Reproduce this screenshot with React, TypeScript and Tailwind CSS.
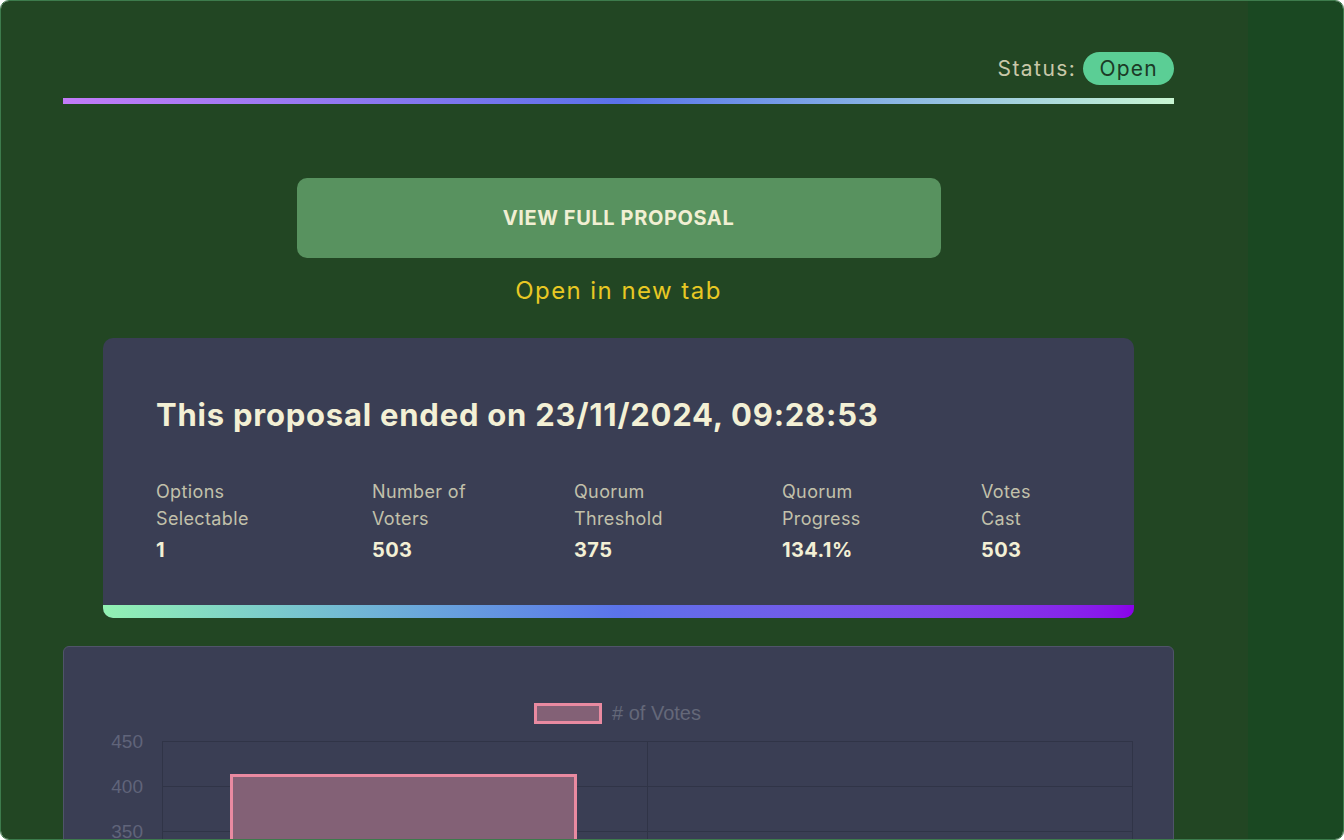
import React from "react";

const stats = [
  { label: "Options Selectable", value: "1", w: "w-[216px]", lw: "w-[120px]" },
  { label: "Number of Voters", value: "503", w: "w-[202px]", lw: "w-[120px]" },
  { label: "Quorum Threshold", value: "375", w: "w-[208px]", lw: "w-[120px]" },
  { label: "Quorum Progress", value: "134.1%", w: "w-[199px]", lw: "w-[120px]" },
  { label: "Votes Cast", value: "503", w: "w-[100px]", lw: "w-[70px]" },
];

function VotesChart() {
  const gridY = [94, 139, 184, 229, 274];
  const ticks = [
    { y: 101, t: "450" },
    { y: 146, t: "400" },
    { y: 191, t: "350" },
  ];
  return (
    <svg width="1108" height="320" className="block">
      {/* legend */}
      <rect x="471.5" y="57.5" width="65" height="18" fill="#836176" stroke="#e98aa1" strokeWidth="3" />
      <text x="548" y="73" fill="#646879" fontSize="20" fontFamily="'Liberation Sans', Arial, sans-serif">
        # of Votes
      </text>
      {/* grid */}
      {gridY.map((y) => (
        <line key={y} x1="98" x2="1068" y1={y + 0.5} y2={y + 0.5} stroke="#303447" strokeWidth="1" />
      ))}
      {[98, 583, 1068].map((x) => (
        <line key={x} x1={x + 0.5} x2={x + 0.5} y1="94" y2="320" stroke="#303447" strokeWidth="1" />
      ))}
      {ticks.map((k) => (
        <text
          key={k.t}
          x="79"
          y={k.y}
          textAnchor="end"
          fill="#60647a"
          fontSize="19"
          fontFamily="'Liberation Sans', Arial, sans-serif"
        >
          {k.t}
        </text>
      ))}
      {/* bar */}
      <rect x="167.5" y="128.5" width="344" height="300" fill="#836176" stroke="#e98aa1" strokeWidth="3" />
    </svg>
  );
}

export default function App() {
  return (
    <div className="w-[1344px] h-[840px] bg-white font-['Inter',sans-serif]">
      <div className="h-full flex rounded-[9px] border border-[#3d7b4c] overflow-hidden">
        {/* Main column */}
        <main className="w-[1247px] shrink-0 bg-[#224623]">
          <div className="ml-[62px] w-[1111px] pt-[51px]">
            {/* Status */}
            <div className="flex items-center justify-end gap-[7px]">
              <span className="text-[21px] tracking-[0.07em] text-[#c9c8a9]">Status:</span>
              <span className="h-[33px] px-[16px] flex items-center rounded-full bg-[#5bce95] text-[21px] tracking-[0.06em] text-[#1b3a26]">
                Open
              </span>
            </div>
            <div className="mt-[13px] h-[6px] bg-linear-to-r from-[#c27bf8] via-[#5a72ea] to-[#c8f6d2]" />

            {/* Full proposal */}
            <div className="mt-[74px] flex flex-col items-center">
              <button className="w-[644px] h-[80px] rounded-[10px] bg-[#58925f] text-[20px] font-bold tracking-[0.03em] text-[#f1efd3]">
                VIEW FULL PROPOSAL
              </button>
              <a className="mt-[19px] text-[24px] leading-[28px] tracking-[0.06em] text-[#e8c824]">Open in new tab</a>
            </div>

            {/* Summary card */}
            <section className="mx-10 mt-[33px] rounded-[10px] overflow-hidden bg-[#3a3e54]">
              <div className="px-[53px] pt-[59px] pb-[41px]">
                <h2 className="text-[31px] leading-[36px] font-bold tracking-[0.025em] text-[#f3f0d5]">
                  This proposal ended on 23/11/2024, 09:28:53
                </h2>
                <div className="mt-[45px] flex">
                  {stats.map((s) => (
                    <div key={s.label} className={s.w}>
                      <div className={`${s.lw} text-[18px] leading-[27px] tracking-[0.02em] text-[#c2c1ab]`}>
                        {s.label}
                      </div>
                      <div className="mt-[4px] text-[20px] leading-[28px] font-bold tracking-[0.02em] text-[#f3f0d5]">
                        {s.value}
                      </div>
                    </div>
                  ))}
                </div>
              </div>
              <div className="h-[13px] bg-linear-to-r from-[#92f2b2] via-[#5b73ea] to-[#8a00e9]" />
            </section>

            {/* Chart card */}
            <section className="mt-[28px] h-[420px] rounded-[6px] border border-[#50546a] bg-[#3a3e54] overflow-hidden">
              <VotesChart />
            </section>
          </div>
        </main>

        {/* Right rail */}
        <aside className="flex-1 bg-[#1a4822]" />
      </div>
    </div>
  );
}
